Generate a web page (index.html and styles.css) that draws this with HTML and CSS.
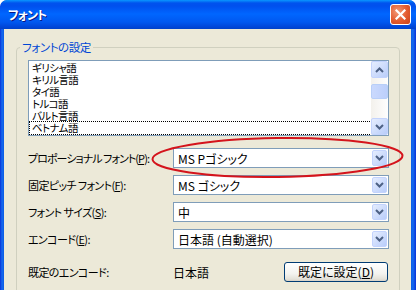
FILE: index.html
```html
<!DOCTYPE html>
<html lang="ja">
<head>
    <meta charset="UTF-8">
    <meta name="viewport" content="width=device-width, initial-scale=1.0">
    <title>フォント</title>
    <link rel="stylesheet" href="styles.css">
</head>
<body>
    <div class="window">
        <div class="titlebar">
            <span class="title">フォント</span>
            <button class="close" aria-label="閉じる">
                <svg width="11" height="11" viewBox="0 0 11 11"><path d="M1.5 1.5 L9.5 9.5 M9.5 1.5 L1.5 9.5" stroke="#fff" stroke-width="2.2" stroke-linecap="square"/></svg>
            </button>
        </div>
        <div class="client">
            <fieldset class="group">
                <legend>フォントの設定</legend>
                <div class="listbox">
                    <ul class="items">
                        <li>ギリシャ語</li>
                        <li>キリル言語</li>
                        <li>タイ語</li>
                        <li>トルコ語</li>
                        <li>バルト言語</li>
                        <li class="focus">ベトナム語</li>
                    </ul>
                    <div class="vscroll">
                        <div class="sbtn">
                            <svg width="9" height="6" viewBox="0 0 9 6"><path d="M1 5 L4.5 1.5 L8 5" fill="none" stroke="#4d6185" stroke-width="2"/></svg>
                        </div>
                        <div class="thumb"></div>
                        <div class="sbtn down">
                            <svg width="9" height="6" viewBox="0 0 9 6"><path d="M1 1 L4.5 4.5 L8 1" fill="none" stroke="#4d6185" stroke-width="2"/></svg>
                        </div>
                    </div>
                </div>

                <div class="row first">
                    <label class="lbl tight">プロポーショナル フォント(<u>P</u>):</label>
                    <div class="combo"><span>MS Pゴシック</span><i class="drop"><svg width="9" height="6" viewBox="0 0 9 6"><path d="M1 1 L4.5 4.5 L8 1" fill="none" stroke="#4d6185" stroke-width="2"/></svg></i></div>
                </div>
                <div class="row">
                    <label class="lbl">固定ピッチ フォント(<u>F</u>):</label>
                    <div class="combo"><span>MS ゴシック</span><i class="drop"><svg width="9" height="6" viewBox="0 0 9 6"><path d="M1 1 L4.5 4.5 L8 1" fill="none" stroke="#4d6185" stroke-width="2"/></svg></i></div>
                </div>
                <div class="row">
                    <label class="lbl">フォント サイズ(<u>S</u>):</label>
                    <div class="combo"><span>中</span><i class="drop"><svg width="9" height="6" viewBox="0 0 9 6"><path d="M1 1 L4.5 4.5 L8 1" fill="none" stroke="#4d6185" stroke-width="2"/></svg></i></div>
                </div>
                <div class="row">
                    <label class="lbl">エンコード(<u>E</u>):</label>
                    <div class="combo"><span>日本語 (自動選択)</span><i class="drop"><svg width="9" height="6" viewBox="0 0 9 6"><path d="M1 1 L4.5 4.5 L8 1" fill="none" stroke="#4d6185" stroke-width="2"/></svg></i></div>
                </div>
                <div class="row last">
                    <span class="lbl">既定のエンコード:</span>
                    <div class="value">
                        <span>日本語</span>
                        <button class="btn">既定に設定(<u>D</u>)</button>
                    </div>
                </div>
            </fieldset>
        </div>

        <!-- red marker around the proportional font combo -->
        <svg class="marker" width="416" height="290" viewBox="0 0 416 290">
            <ellipse cx="277.5" cy="157.5" rx="125" ry="19.5" fill="none" stroke="#d4141c" stroke-width="2" transform="rotate(-0.8 277.5 157.5)"/>
        </svg>
    </div>
</body>
</html>
```

FILE: styles.css
```css
body {
    margin: 0;
    font-family: "Noto Sans CJK JP", "Liberation Sans", sans-serif;
    font-size: 12px;
    font-feature-settings: "palt";
}
.window {
    position: relative;
    width: 416px;
    height: 290px;
    overflow: hidden;
    display: flex;
    flex-direction: column;
    background: linear-gradient(to right, #0831d9 0, #166aee 2px, #0a5be6 4px, #0a5be6 411px, #166aee 413px, #0831d9 416px);
    border-radius: 7px 7px 0 0;
}
.titlebar {
    height: 29px;
    flex: none;
    box-sizing: border-box;
    padding: 0 5px 0 8px;
    display: flex;
    align-items: center;
    justify-content: space-between;
    background: linear-gradient(to bottom, #0997ff 0, #0053ee 3px, #0050ee 6px, #0066ff 14px, #0058f0 22px, #0046d8 27px, #0041c8 29px);
    border-radius: 7px 7px 0 0;
}
.title {
    color: #fff;
    font-weight: bold;
    font-size: 12px;
    letter-spacing: -0.8px;
    line-height: 16px;
    text-shadow: 1px 1px 0 #0a1883;
}
.close {
    width: 21px;
    height: 21px;
    padding: 0;
    border: 1px solid #fff;
    border-radius: 3px;
    background: radial-gradient(circle at 35% 35%, #f29a78 0, #e35a2e 55%, #c8411a 100%);
    display: flex;
    align-items: center;
    justify-content: center;
}
.client {
    flex: 1;
    margin: 0 5px 0 4px;
    padding: 11px 11px 0 12px;
    background: #ece9d8;
}
.group {
    margin: 0;
    padding: 6px 10px 20px 11px;
    border: 1px solid #d0d0bf;
    border-radius: 4px;
    min-inline-size: 0;
}
.group legend {
    padding: 0 2px;
    margin-left: -8px;
    color: #0046d5;
    font-size: 11.5px;
    letter-spacing: -0.4px;
    line-height: 14px;
}

/* list box */
.listbox {
    height: 76px;
    box-sizing: border-box;
    border: 1px solid #7f9db9;
    background: #fff;
    display: flex;
}
.items {
    flex: 1;
    list-style: none;
    margin: 0;
    padding: 1px 0 0 1px;
}
.items li {
    height: 12px;
    line-height: 12px;
    padding-left: 2px;
    font-size: 10.5px;
    letter-spacing: -0.6px;
    white-space: nowrap;
}
.items li.focus {
    outline: 1px dotted #000;
    outline-offset: 0;
}
.vscroll {
    width: 17px;
    display: flex;
    flex-direction: column;
    background: linear-gradient(to right, #f3f1ec, #fefefe);
}
.sbtn {
    height: 17px;
    box-sizing: border-box;
    border: 1px solid #c3d3fd;
    border-radius: 2px;
    background: linear-gradient(to bottom right, #e5edfe, #b9cdfa);
    display: flex;
    align-items: center;
    justify-content: center;
}
.sbtn.down {
    margin-top: auto;
}
.thumb {
    height: 15px;
    margin-top: 6px;
    box-sizing: border-box;
    border: 1px solid #b8cff8;
    border-radius: 2px;
    background: linear-gradient(to right, #cad9fd, #bccffb);
}

/* form rows */
.row {
    display: flex;
    align-items: center;
    height: 20px;
    margin-top: 7px;
    white-space: nowrap;
}
.row.first {
    margin-top: 12px;
}
.row.last {
    margin-top: 13px;
}
.lbl {
    width: 145px;
    flex: none;
    font-size: 11px;
    letter-spacing: -0.6px;
}
.lbl.tight {
    letter-spacing: -0.95px;
}
.combo {
    width: 216px;
    height: 20px;
    box-sizing: border-box;
    border: 1px solid #7f9db9;
    background: #fff;
    display: flex;
    align-items: center;
    padding-left: 4px;
}
.combo span {
    flex: 1;
}
.drop {
    width: 15px;
    height: 16px;
    margin: 0 1px;
    box-sizing: border-box;
    border: 1px solid #c3d3fd;
    border-radius: 2px;
    background: linear-gradient(to bottom right, #e5edfe, #b9cdfa);
    display: flex;
    align-items: center;
    justify-content: center;
}
.value {
    width: 215px;
    display: flex;
    align-items: center;
    justify-content: space-between;
}
.btn {
    width: 104px;
    height: 20px;
    padding: 0;
    border: 1px solid #003c74;
    border-radius: 3px;
    background: linear-gradient(to bottom, #ffffff, #f3f3ef 60%, #e3e1d8 90%, #d6d0c5);
    font: inherit;
    line-height: 16px;
    color: #000;
}

.marker {
    position: absolute;
    left: 0;
    top: 0;
    pointer-events: none;
}
```
